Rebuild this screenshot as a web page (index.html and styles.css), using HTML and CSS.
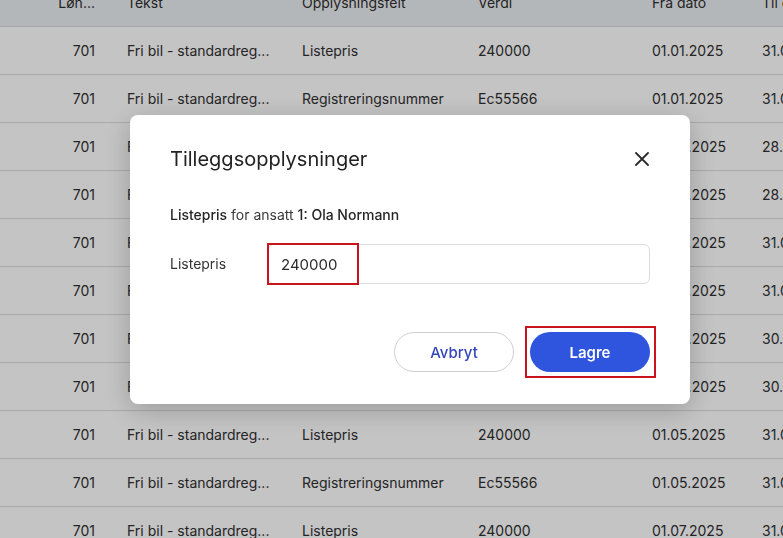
FILE: index.html
```html
<!DOCTYPE html>
<html lang="no">
<head>
<meta charset="utf-8">
<title>Tilleggsopplysninger</title>
<link rel="stylesheet" href="styles.css">
</head>
<body>
<div class="page">
  <div class="table">
    <div class="row head">
      <div class="c num">Løn...</div><div class="c">Tekst</div><div class="c">Opplysningsfelt</div><div class="c">Verdi</div><div class="c">Fra dato</div><div class="c">Til dato</div>
    </div>
    <div class="row"><div class="c num">701</div><div class="c">Fri bil - standardreg...</div><div class="c">Listepris</div><div class="c">240000</div><div class="c">01.01.2025</div><div class="c">31.01.2025</div></div>
    <div class="row"><div class="c num">701</div><div class="c">Fri bil - standardreg...</div><div class="c">Registreringsnummer</div><div class="c">Ec55566</div><div class="c">01.01.2025</div><div class="c">31.01.2025</div></div>
    <div class="row"><div class="c num">701</div><div class="c">Fri bil - standardreg...</div><div class="c">Listepris</div><div class="c">240000</div><div class="c">01.02.2025</div><div class="c">28.02.2025</div></div>
    <div class="row"><div class="c num">701</div><div class="c">Fri bil - standardreg...</div><div class="c">Registreringsnummer</div><div class="c">Ec55566</div><div class="c">01.02.2025</div><div class="c">28.02.2025</div></div>
    <div class="row"><div class="c num">701</div><div class="c">Fri bil - standardreg...</div><div class="c">Listepris</div><div class="c">240000</div><div class="c">01.03.2025</div><div class="c">31.03.2025</div></div>
    <div class="row"><div class="c num">701</div><div class="c">Fri bil - standardreg...</div><div class="c">Registreringsnummer</div><div class="c">Ec55566</div><div class="c">01.03.2025</div><div class="c">31.03.2025</div></div>
    <div class="row"><div class="c num">701</div><div class="c">Fri bil - standardreg...</div><div class="c">Listepris</div><div class="c">240000</div><div class="c">01.04.2025</div><div class="c">30.04.2025</div></div>
    <div class="row"><div class="c num">701</div><div class="c">Fri bil - standardreg...</div><div class="c">Registreringsnummer</div><div class="c">Ec55566</div><div class="c">01.04.2025</div><div class="c">30.04.2025</div></div>
    <div class="row"><div class="c num">701</div><div class="c">Fri bil - standardreg...</div><div class="c">Listepris</div><div class="c">240000</div><div class="c">01.05.2025</div><div class="c">31.05.2025</div></div>
    <div class="row"><div class="c num">701</div><div class="c">Fri bil - standardreg...</div><div class="c">Registreringsnummer</div><div class="c">Ec55566</div><div class="c">01.05.2025</div><div class="c">31.05.2025</div></div>
    <div class="row"><div class="c num">701</div><div class="c">Fri bil - standardreg...</div><div class="c">Listepris</div><div class="c">240000</div><div class="c">01.07.2025</div><div class="c">31.07.2025</div></div>
  </div>
</div>
<div class="backdrop"></div>
<div class="modal" role="dialog">
  <div class="modal-head">
    <h2 class="title">Tilleggsopplysninger</h2>
    <button class="close" aria-label="Lukk">
      <svg width="14" height="14" viewBox="0 0 14 14"><path d="M1 1L13 13M13 1L1 13" stroke="#2b2b2b" stroke-width="1.8" stroke-linecap="round"/></svg>
    </button>
  </div>
  <p class="sub"><span class="em">Listepris</span> for ansatt <span class="em">1: Ola Normann</span></p>
  <div class="field">
    <label class="label">Listepris</label>
    <div class="input-wrap">
      <div class="input">240000</div>
      <div class="mark mark-input"></div>
    </div>
  </div>
  <div class="actions">
    <button class="btn ghost">Avbryt</button>
    <div class="save-wrap">
      <button class="btn primary">Lagre</button>
      <div class="mark mark-save"></div>
    </div>
  </div>
</div>
</body>
</html>
```
FILE: styles.css
```css
html, body {
  margin: 0;
  padding: 0;
  background: #ffffff;
  overflow: hidden;
  font-family: Inter, "Noto Sans", sans-serif;
  color: #2f2f2f;
}
.page {
  width: 783px;
  height: 538px;
  overflow: hidden;
}
.table {
  margin-top: -21px;
  width: 900px;
}
.row {
  display: grid;
  grid-template-columns: 111px 175px 176px 174px 110px 154px;
  height: 48px;
  align-items: center;
  border-bottom: 1px solid #dcdcdc;
  box-sizing: border-box;
  font-size: 14px;
  background: #ffffff;
}
.row.head {
  background: #ebeef3;
  border-bottom: 1px solid #d6d9de;
}
.c {
  padding: 0 16px;
  white-space: nowrap;
}
.num {
  text-align: right;
}
.backdrop {
  position: fixed;
  inset: 0;
  background: rgba(0, 0, 0, 0.23);
}
.modal {
  position: fixed;
  left: 130px;
  top: 115px;
  width: 560px;
  height: 289px;
  box-sizing: border-box;
  padding: 30px 40px 32px 40px;
  background: #ffffff;
  border-radius: 8px;
  box-shadow: 0 6px 28px rgba(0, 0, 0, 0.22);
}
.modal-head {
  display: flex;
  align-items: center;
  justify-content: space-between;
  height: 28px;
}
.title {
  margin: 0;
  font-size: 20px;
  line-height: 28px;
  font-weight: 400;
  color: #222222;
}
.close {
  border: 0;
  background: none;
  padding: 0;
  margin-right: 1px;
  width: 14px;
  height: 14px;
  display: flex;
}
.sub {
  margin: 32px 0 0 0;
  font-size: 14px;
  line-height: 20px;
  color: #3a3a3a;
}
.em {
  font-weight: 500;
  color: #262626;
}
.field {
  display: flex;
  align-items: center;
  margin-top: 19px;
}
.label {
  width: 98px;
  font-size: 14px;
  color: #333333;
  margin-top: -1px;
}
.input-wrap {
  position: relative;
  flex: 1;
}
.input {
  height: 40px;
  box-sizing: border-box;
  border: 1px solid #dcdcdc;
  border-radius: 6px;
  padding: 0 12px;
  display: flex;
  align-items: center;
  font-size: 15px;
  color: #2a2a2a;
}
.mark {
  position: absolute;
  border: 2px solid #c8141c;
  box-sizing: border-box;
}
.mark-input {
  left: -1px;
  top: -1px;
  width: 92px;
  height: 42px;
}
.actions {
  display: flex;
  justify-content: flex-end;
  gap: 16px;
  margin-top: 48px;
}
.btn {
  width: 120px;
  height: 40px;
  border-radius: 20px;
  font-family: Inter, "Noto Sans", sans-serif;
  font-size: 15px;
  cursor: pointer;
  box-sizing: border-box;
}
.ghost {
  background: #ffffff;
  border: 1px solid #cfcfcf;
  color: #3446b8;
  font-weight: 500;
}
.save-wrap {
  position: relative;
}
.primary {
  background: #2f55df;
  border: 0;
  color: #ffffff;
  font-weight: 600;
  display: block;
}
.mark-save {
  left: -5px;
  top: -6px;
  width: 131px;
  height: 52px;
}
```
